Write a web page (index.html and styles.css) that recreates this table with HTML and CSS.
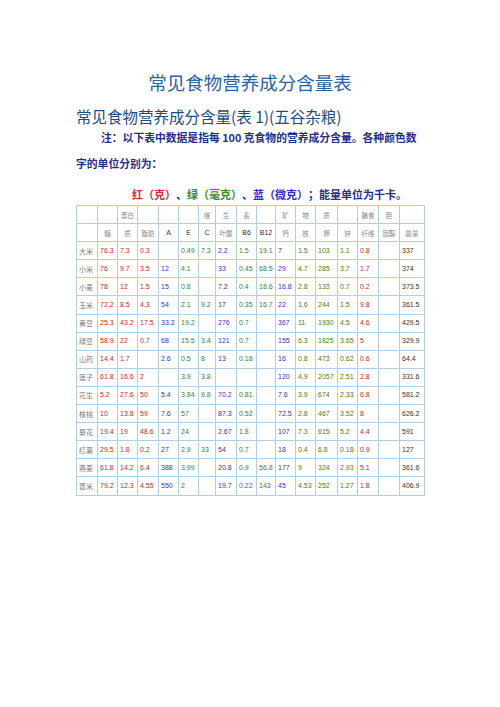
FILE: index.html
```html
<!DOCTYPE html>
<html lang="zh">
<head>
<meta charset="utf-8">
<title>常见食物营养成分含量表</title>
<link rel="stylesheet" href="styles.css">
</head>
<body>
<div class="page">
  <h1 class="title">常见食物营养成分含量表</h1>
  <h2 class="subtitle">常见食物营养成分含量(表 1)(五谷杂粮)</h2>
  <p class="note"><span class="indent">注：以下表中数据是指每 100 克食物的营养成分含量。各种颜色数</span>字的单位分别为：</p>
  <p class="legend"><span class="r">红（克）</span>、<span class="g">绿（毫克）</span>、<span class="b">蓝（微克）</span>；能量单位为千卡。</p>
  <table class="nut">
    <colgroup>
      <col class="w21"><col class="w20"><col class="w20"><col class="w21"><col class="w20"><col class="w20"><col class="w17"><col class="w21"><col class="w20"><col class="w19"><col class="w20"><col class="w20"><col class="w22"><col class="w20"><col class="w21"><col class="w21"><col class="w25">
    </colgroup>
    <tr class="hd">
      <td></td><td></td><td class="cn">蛋白</td><td></td><td></td><td></td><td class="cn">维</td><td class="cn">生</td><td class="cn">素</td><td></td><td class="cn">矿</td><td class="cn">物</td><td class="cn">质</td><td></td><td class="cn">膳食</td><td class="cn">胆</td><td></td>
    </tr>
    <tr class="hd">
      <td></td><td class="cn">糖</td><td class="cn">质</td><td class="cn">脂肪</td><td class="en">A</td><td class="en">E</td><td class="en">C</td><td class="cn">叶酸</td><td class="en">B6</td><td class="en">B12</td><td class="cn">钙</td><td class="cn">铁</td><td class="cn">钾</td><td class="cn">锌</td><td class="cn">纤维</td><td class="cn">固醇</td><td class="cn">能量</td>
    </tr>
    <tr><td class="fn">大米</td><td class="r">76.3</td><td class="r">7.3</td><td class="r">0.3</td><td class="b"></td><td class="g">0.49</td><td class="g">7.3</td><td class="b">2.2</td><td class="g">1.5</td><td class="g">19.1</td><td class="b">7</td><td class="g">1.5</td><td class="g">103</td><td class="g">1.1</td><td class="r">0.8</td><td></td><td class="k">337</td></tr>
    <tr><td class="fn">小米</td><td class="r">76</td><td class="r">9.7</td><td class="r">3.5</td><td class="b">12</td><td class="g">4.1</td><td class="g"></td><td class="b">33</td><td class="g">0.45</td><td class="g">68.5</td><td class="b">29</td><td class="g">4.7</td><td class="g">285</td><td class="g">3.7</td><td class="r">1.7</td><td></td><td class="k">374</td></tr>
    <tr><td class="fn">小麦</td><td class="r">78</td><td class="r">12</td><td class="r">1.5</td><td class="b">15</td><td class="g">0.8</td><td class="g"></td><td class="b">7.2</td><td class="g">0.4</td><td class="g">18.6</td><td class="b">16.8</td><td class="g">2.8</td><td class="g">133</td><td class="g">0.7</td><td class="r">0.2</td><td></td><td class="k">373.5</td></tr>
    <tr><td class="fn">玉米</td><td class="r">72.2</td><td class="r">8.5</td><td class="r">4.3</td><td class="b">54</td><td class="g">2.1</td><td class="g">9.2</td><td class="b">17</td><td class="g">0.35</td><td class="g">16.7</td><td class="b">22</td><td class="g">1.6</td><td class="g">244</td><td class="g">1.5</td><td class="r">9.8</td><td></td><td class="k">361.5</td></tr>
    <tr><td class="fn">黄豆</td><td class="r">25.3</td><td class="r">43.2</td><td class="r">17.5</td><td class="b">33.2</td><td class="g">19.2</td><td class="g"></td><td class="b">276</td><td class="g">0.7</td><td class="g"></td><td class="b">367</td><td class="g">11</td><td class="g">1930</td><td class="g">4.5</td><td class="r">4.6</td><td></td><td class="k">429.5</td></tr>
    <tr><td class="fn">绿豆</td><td class="r">58.9</td><td class="r">22</td><td class="r">0.7</td><td class="b">68</td><td class="g">15.5</td><td class="g">3.4</td><td class="b">121</td><td class="g">0.7</td><td class="g"></td><td class="b">155</td><td class="g">6.3</td><td class="g">1825</td><td class="g">3.65</td><td class="r">5</td><td></td><td class="k">329.9</td></tr>
    <tr><td class="fn">山药</td><td class="r">14.4</td><td class="r">1.7</td><td class="r"></td><td class="b">2.6</td><td class="g">0.5</td><td class="g">8</td><td class="b">13</td><td class="g">0.18</td><td class="g"></td><td class="b">16</td><td class="g">0.8</td><td class="g">473</td><td class="g">0.62</td><td class="r">0.6</td><td></td><td class="k">64.4</td></tr>
    <tr><td class="fn">莲子</td><td class="r">61.8</td><td class="r">16.6</td><td class="r">2</td><td class="b"></td><td class="g">3.9</td><td class="g">3.8</td><td class="b"></td><td class="g"></td><td class="g"></td><td class="b">120</td><td class="g">4.9</td><td class="g">2057</td><td class="g">2.51</td><td class="r">2.8</td><td></td><td class="k">331.6</td></tr>
    <tr><td class="fn">花生</td><td class="r">5.2</td><td class="r">27.6</td><td class="r">50</td><td class="b">5.4</td><td class="g">3.84</td><td class="g">9.8</td><td class="b">70.2</td><td class="g">0.81</td><td class="g"></td><td class="b">7.6</td><td class="g">3.9</td><td class="g">674</td><td class="g">2.33</td><td class="r">6.8</td><td></td><td class="k">581.2</td></tr>
    <tr><td class="fn">核桃</td><td class="r">10</td><td class="r">13.8</td><td class="r">59</td><td class="b">7.6</td><td class="g">57</td><td class="g"></td><td class="b">87.3</td><td class="g">0.52</td><td class="g"></td><td class="b">72.5</td><td class="g">2.8</td><td class="g">467</td><td class="g">3.52</td><td class="r">8</td><td></td><td class="k">626.2</td></tr>
    <tr><td class="fn">葵花</td><td class="r">19.4</td><td class="r">19</td><td class="r">48.6</td><td class="b">1.2</td><td class="g">24</td><td class="g"></td><td class="b">2.67</td><td class="g">1.8</td><td class="g"></td><td class="b">107</td><td class="g">7.3</td><td class="g">615</td><td class="g">5.2</td><td class="r">4.4</td><td></td><td class="k">591</td></tr>
    <tr><td class="fn">红薯</td><td class="r">29.5</td><td class="r">1.8</td><td class="r">0.2</td><td class="b">27</td><td class="g">2.9</td><td class="g">33</td><td class="b">54</td><td class="g">0.7</td><td class="g"></td><td class="b">18</td><td class="g">0.4</td><td class="g">6.8</td><td class="g">0.18</td><td class="r">0.9</td><td></td><td class="k">127</td></tr>
    <tr><td class="fn">燕麦</td><td class="r">61.8</td><td class="r">14.2</td><td class="r">6.4</td><td class="b">388</td><td class="g">3.99</td><td class="g"></td><td class="b">20.8</td><td class="g">0.9</td><td class="g">56.8</td><td class="b">177</td><td class="g">9</td><td class="g">324</td><td class="g">2.93</td><td class="r">5.1</td><td></td><td class="k">361.6</td></tr>
    <tr><td class="fn">薏米</td><td class="r">79.2</td><td class="r">12.3</td><td class="r">4.55</td><td class="b">550</td><td class="g">2</td><td class="g"></td><td class="b">19.7</td><td class="g">0.22</td><td class="g">143</td><td class="b">45</td><td class="g">4.53</td><td class="g">252</td><td class="g">1.27</td><td class="r">1.8</td><td></td><td class="k">406.9</td></tr>
  </table>
</div>
</body>
</html>
```
FILE: styles.css
```css
html, body {
  margin: 0;
  padding: 0;
  background: #ffffff;
}

.page {
  width: 348px;
  padding: 70px 76px 0 76px;
  font-family: "Noto Sans CJK SC", "Noto Sans", sans-serif;
  text-spacing-trim: space-all;
}

.title {
  margin: 0;
  font-size: 18.5px;
  line-height: 24px;
  font-weight: normal;
  text-align: center;
  color: #2c62a3;
}

.subtitle {
  margin: 14px 0 0 0;
  font-size: 15.5px;
  line-height: 16px;
  font-weight: normal;
  color: #1f4c80;
  white-space: nowrap;
}

.note {
  margin: 0;
  font-size: 10.8px;
  line-height: 26px;
  font-weight: bold;
  color: #22308a;
}

.note .indent {
  display: block;
  padding-left: 25px;
  white-space: nowrap;
}

.legend {
  margin: 8px 0 0 0;
  padding-left: 56px;
  font-size: 11px;
  line-height: 20px;
  font-weight: bold;
  color: #22308a;
  white-space: nowrap;
}

.legend .r { color: #c93232; }
.legend .g { color: #3e8a2a; }
.legend .b { color: #2d2dd0; }

.nut {
  margin-top: 1px;
  width: 348px;
  table-layout: fixed;
  border-collapse: collapse;
  font-family: "Liberation Sans", Arial, sans-serif;
  font-size: 7px;
}

.nut col.w17 { width: 17px; }
.nut col.w19 { width: 19px; }
.nut col.w20 { width: 20px; }
.nut col.w21 { width: 21px; }
.nut col.w22 { width: 22px; }
.nut col.w25 { width: 25px; }

.nut tr { height: 18.1px; }

.nut td {
  border: 1px solid #b3cde3;
  padding: 0 0 0 2px;
  white-space: nowrap;
  overflow: hidden;
  vertical-align: middle;
  line-height: 10px;
}

.nut .hd td { text-align: center; padding: 0; }

.nut .cn {
  font-family: "Noto Sans CJK SC", sans-serif;
  color: #8a8a8a;
  font-size: 6.5px;
}

.nut .en {
  color: #333333;
}

.nut .fn {
  font-family: "Noto Sans CJK SC", sans-serif;
  color: #7a7a7a;
  font-size: 7px;
}

.nut .r { color: #ac3434; }
.nut .g { color: #3f7f2a; }
.nut .b { color: #3434c4; }
.nut .k { color: #333333; }
```
